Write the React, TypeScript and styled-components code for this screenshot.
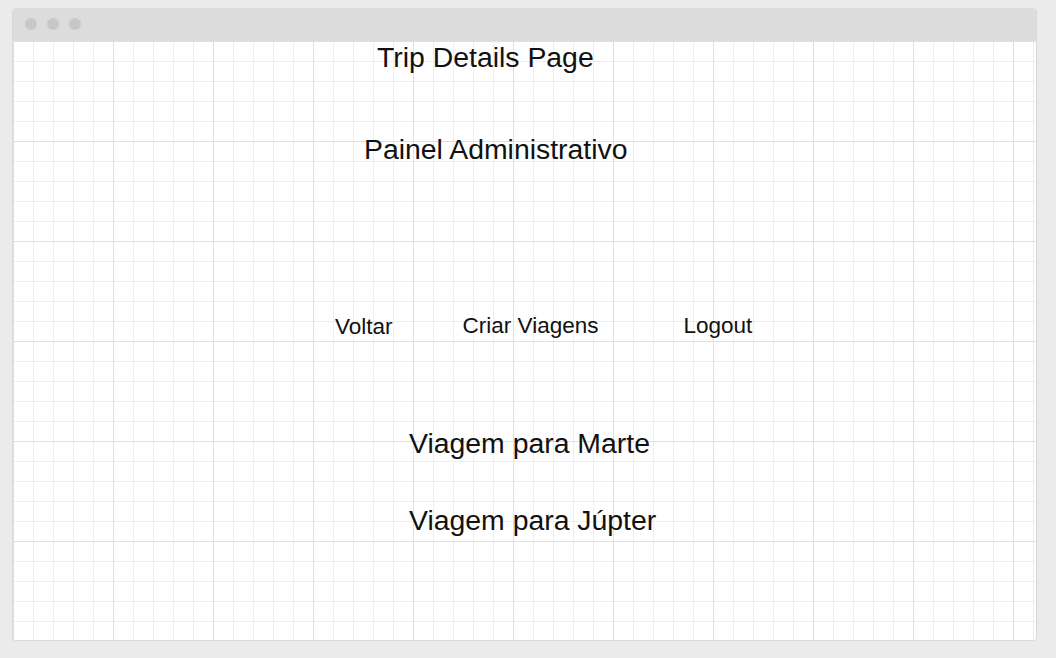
import React from "react";
import styled, { createGlobalStyle } from "styled-components";

const GlobalStyle = createGlobalStyle`
  html, body {
    margin: 0;
    padding: 0;
    background: #ebebeb;
    font-family: "Liberation Sans", Arial, sans-serif;
  }
`;

const Page = styled.div`
  width: 1056px;
  height: 658px;
  padding: 8px 19px 17px 12px;
  box-sizing: border-box;
`;

const Window = styled.div`
  width: 1025px;
  height: 633px;
  display: flex;
  flex-direction: column;
  border: 1px solid #d9d9d9;
  border-top: none;
  border-radius: 4px;
  overflow: hidden;
  box-sizing: border-box;
  background: #fff;
`;

const TitleBar = styled.div`
  height: 33px;
  flex: none;
  background: #dcdcdc;
  display: flex;
  align-items: center;
  gap: 10px;
  padding-left: 13px;
  padding-bottom: 1px;
  box-sizing: border-box;
  margin: 0 -1px;
`;

const Dot = styled.span`
  width: 12px;
  height: 12px;
  border-radius: 50%;
  background: #c8c8c8;
`;

const Canvas = styled.div`
  flex: 1;
  position: relative;
  background-color: #fff;
  background-image:
    linear-gradient(to right, #e0e0e0 1px, transparent 1px),
    linear-gradient(to bottom, #e0e0e0 1px, transparent 1px),
    linear-gradient(to right, #eeeeee 1px, transparent 1px),
    linear-gradient(to bottom, #eeeeee 1px, transparent 1px);
  background-size: 100px 100px, 100px 100px, 20px 20px, 20px 20px;
  display: flex;
  flex-direction: column;
  align-items: flex-start;
  color: #111;
`;

const Heading = styled.h1<{ $left: number; $top: number }>`
  margin: ${(p) => p.$top}px 0 0 ${(p) => p.$left}px;
  font-size: 28.4px;
  line-height: 32px;
  font-weight: 400;
  white-space: nowrap;
`;

const Nav = styled.nav`
  display: flex;
  align-items: flex-start;
  margin-top: 148px;
  margin-left: 322px;
`;

const NavItem = styled.span<{ $gap: number; $drop?: number }>`
  margin-left: ${(p) => p.$gap}px;
  margin-top: ${(p) => p.$drop ?? 0}px;
  font-size: 22.5px;
  line-height: 25px;
  white-space: nowrap;
  cursor: pointer;
`;

const TripList = styled.div`
  display: flex;
  flex-direction: column;
  margin-top: 88px;
  margin-left: 396px;
  gap: 45px;
`;

const TripTitle = styled.h2`
  margin: 0;
  font-size: 28.4px;
  line-height: 32px;
  font-weight: 400;
  white-space: nowrap;
`;

export default function App() {
  return (
    <>
      <GlobalStyle />
      <Page>
        <Window>
          <TitleBar>
            <Dot />
            <Dot />
            <Dot />
          </TitleBar>
          <Canvas>
            <Heading $left={364} $top={0}>Trip Details Page</Heading>
            <Heading $left={351} $top={60}>Painel Administrativo</Heading>
            <Nav>
              <NavItem $gap={0} $drop={1}>Voltar</NavItem>
              <NavItem $gap={70}>Criar Viagens</NavItem>
              <NavItem $gap={85}>Logout</NavItem>
            </Nav>
            <TripList>
              <TripTitle>Viagem para Marte</TripTitle>
              <TripTitle>Viagem para Júpter</TripTitle>
            </TripList>
          </Canvas>
        </Window>
      </Page>
    </>
  );
}
